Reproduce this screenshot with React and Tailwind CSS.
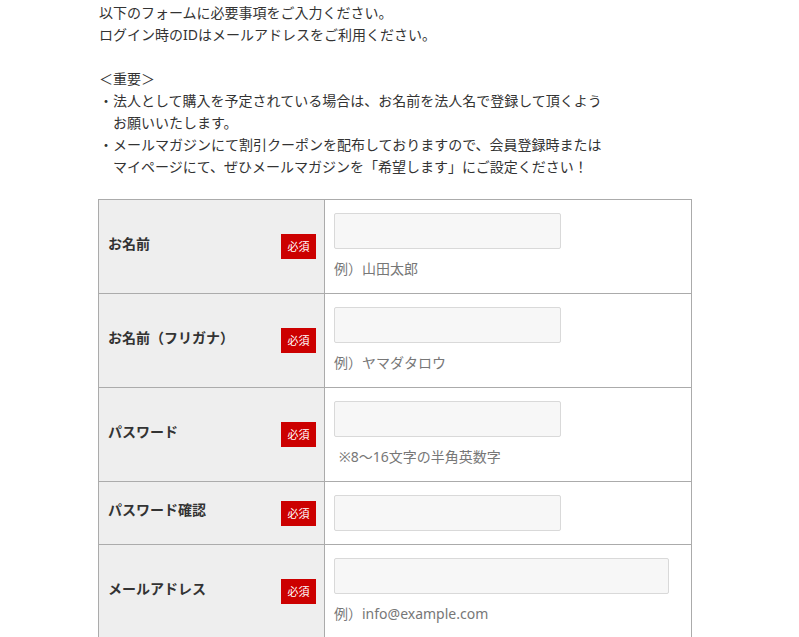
import React from 'react';

const ROWS = [
  { label: 'お名前', hint: '例）山田太郎' },
  { label: 'お名前（フリガナ）', hint: '例）ヤマダタロウ' },
  { label: 'パスワード', hint: '※8〜16文字の半角英数字', hintClass: 'pl-[5px]' },
  { label: 'パスワード確認' },
  { label: 'メールアドレス', hint: '例）info@example.com', wide: true },
];

const font = 'font-["Noto_Sans","Noto_Sans_CJK_JP",sans-serif]';

function Badge() {
  return (
    <span className="flex h-[25px] w-[35px] shrink-0 items-center justify-center bg-[#cc0000] text-[11px] leading-none text-white">
      必須
    </span>
  );
}

export default function App() {
  return (
    <div className={`min-h-[637px] bg-white pt-[2px] text-[14px] leading-[22px] text-[#333] ${font}`}>
      <div className="ml-[99px] w-[510px]">
        {/* intro */}
        <p>以下のフォームに必要事項をご入力ください。</p>
        <p>ログイン時のIDはメールアドレスをご利用ください。</p>
        <p className="h-[22px]" />
        <p>＜重要＞</p>
        <p className="pl-[1em] -indent-[1em]">
          ・法人として購入を予定されている場合は、お名前を法人名で登録して頂くよう<br />お願いいたします。
        </p>
        <p className="pl-[1em] -indent-[1em]">
          ・メールマガジンにて割引クーポンを配布しておりますので、会員登録時または<br />マイページにて、ぜひメールマガジンを「希望します」にご設定ください！
        </p>
      </div>

      {/* form table */}
      <div className="ml-[98px] mt-[21px] w-[594px] border-l border-r border-t border-[#ababab]">
        {ROWS.map((r) => (
          <div key={r.label} className="flex border-b border-[#ababab]">
            <div className="flex w-[226px] shrink-0 items-center justify-between border-r border-[#ababab] bg-[#eeeeee] pl-[9px] pr-[8px]">
              <span className="pb-[6px] font-bold">{r.label}</span>
              <Badge />
            </div>
            <div className="flex-1 px-[9px] py-[13px]">
              <input
                type="text"
                className={`block h-[36px] rounded-[2px] border border-[#d9d9d9] bg-[#f7f7f7] outline-none ${r.wide ? 'w-[335px]' : 'w-[227px]'}`}
              />
              {r.hint && (
                <p className={`mt-[9px] text-[#777] ${r.hintClass || ''}`}>{r.hint}</p>
              )}
            </div>
          </div>
        ))}
      </div>
    </div>
  );
}
